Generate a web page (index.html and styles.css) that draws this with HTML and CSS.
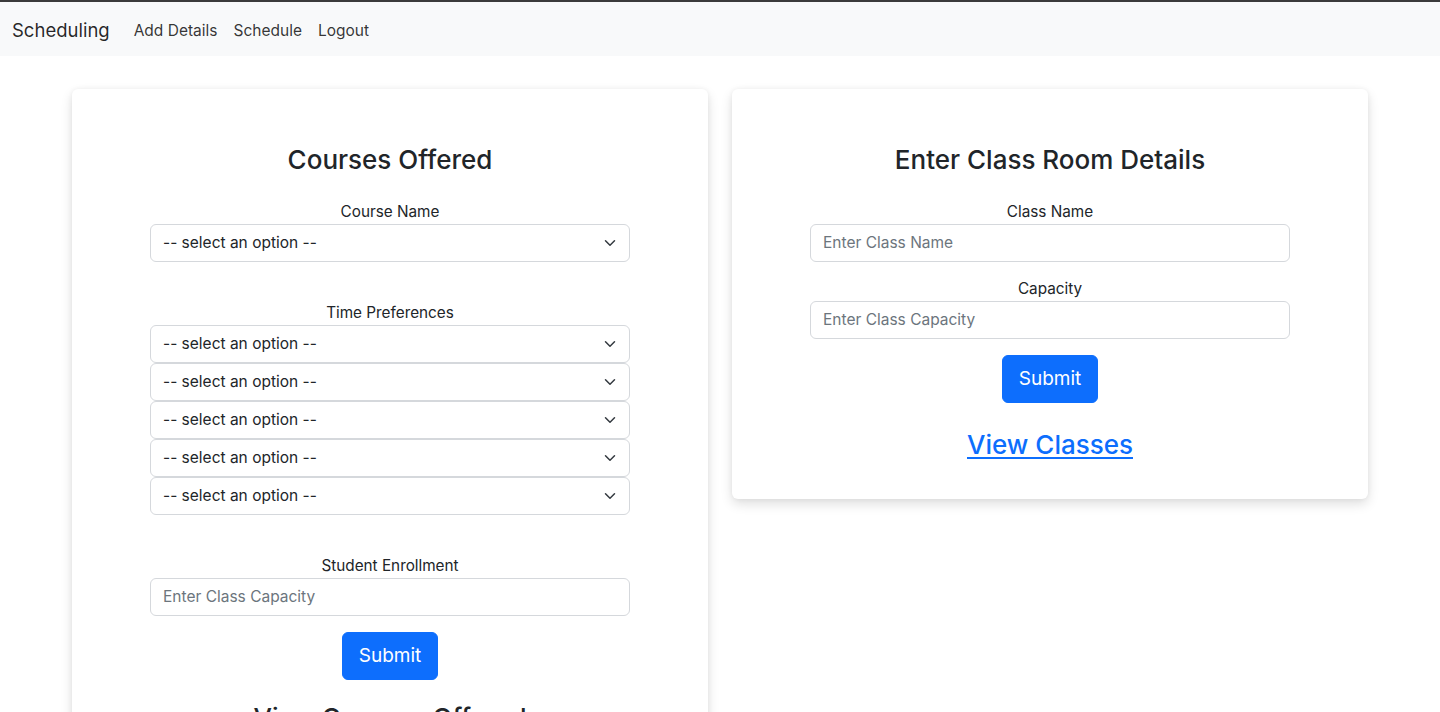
FILE: index.html
```html
<!DOCTYPE html>
<html lang="en">
<head>
<meta charset="utf-8">
<title>Scheduling</title>
<link rel="stylesheet" href="styles.css">
</head>
<body>
<nav class="navbar">
  <a class="brand" href="#">Scheduling</a>
  <ul class="nav">
    <li><a class="nav-link" href="#">Add Details</a></li>
    <li><a class="nav-link" href="#">Schedule</a></li>
    <li><a class="nav-link" href="#">Logout</a></li>
  </ul>
</nav>
<main class="container">
  <section class="card">
    <h3 class="card-title">Courses Offered</h3>
    <form class="form">
      <div class="field">
        <label class="label">Course Name</label>
        <div class="select-wrap">
          <select class="select"><option>-- select an option --</option></select>
          <svg class="chev" viewBox="0 0 16 16" width="16" height="12"><path d="m2 5 6 6 6-6" fill="none" stroke="#343a40" stroke-width="2" stroke-linecap="round" stroke-linejoin="round"/></svg>
        </div>
      </div>
      <div class="field field-spaced">
        <label class="label">Time Preferences</label>
        <div class="select-wrap">
          <select class="select"><option>-- select an option --</option></select>
          <svg class="chev" viewBox="0 0 16 16" width="16" height="12"><path d="m2 5 6 6 6-6" fill="none" stroke="#343a40" stroke-width="2" stroke-linecap="round" stroke-linejoin="round"/></svg>
        </div>
        <div class="select-wrap">
          <select class="select"><option>-- select an option --</option></select>
          <svg class="chev" viewBox="0 0 16 16" width="16" height="12"><path d="m2 5 6 6 6-6" fill="none" stroke="#343a40" stroke-width="2" stroke-linecap="round" stroke-linejoin="round"/></svg>
        </div>
        <div class="select-wrap">
          <select class="select"><option>-- select an option --</option></select>
          <svg class="chev" viewBox="0 0 16 16" width="16" height="12"><path d="m2 5 6 6 6-6" fill="none" stroke="#343a40" stroke-width="2" stroke-linecap="round" stroke-linejoin="round"/></svg>
        </div>
        <div class="select-wrap">
          <select class="select"><option>-- select an option --</option></select>
          <svg class="chev" viewBox="0 0 16 16" width="16" height="12"><path d="m2 5 6 6 6-6" fill="none" stroke="#343a40" stroke-width="2" stroke-linecap="round" stroke-linejoin="round"/></svg>
        </div>
        <div class="select-wrap">
          <select class="select"><option>-- select an option --</option></select>
          <svg class="chev" viewBox="0 0 16 16" width="16" height="12"><path d="m2 5 6 6 6-6" fill="none" stroke="#343a40" stroke-width="2" stroke-linecap="round" stroke-linejoin="round"/></svg>
        </div>
      </div>
      <div class="field field-spaced">
        <label class="label">Student Enrollment</label>
        <input class="input" type="text" placeholder="Enter Class Capacity">
      </div>
      <button class="btn" type="button">Submit</button>
    </form>
    <h3 class="sub-title">View Courses Offered</h3>
  </section>

  <section class="card">
    <h3 class="card-title">Enter Class Room Details</h3>
    <form class="form">
      <div class="field">
        <label class="label">Class Name</label>
        <input class="input" type="text" placeholder="Enter Class Name">
      </div>
      <div class="field field-tight">
        <label class="label">Capacity</label>
        <input class="input" type="text" placeholder="Enter Class Capacity">
      </div>
      <button class="btn" type="button">Submit</button>
    </form>
    <a class="big-link" href="#">View Classes</a>
  </section>
</main>
</body>
</html>
```

FILE: styles.css
```css
* {
  box-sizing: border-box;
}

body {
  margin: 0;
  font-family: Inter, "Liberation Sans", Arial, sans-serif;
  font-size: 16px;
  color: #212529;
  background: #fff;
  border-top: 2px solid #3b3b3b;
}

.navbar {
  height: 54px;
  background: #f8f9fa;
  display: flex;
  align-items: center;
  padding: 2px 12px 0;
}

.brand {
  font-size: 18.5px;
  color: rgba(0, 0, 0, 0.85);
  text-decoration: none;
  margin-right: 16px;
}

.nav {
  display: flex;
  list-style: none;
  margin: 0;
  padding: 0;
}

.nav-link {
  display: block;
  padding: 8px;
  font-size: 15.5px;
  color: rgba(0, 0, 0, 0.8);
  text-decoration: none;
}

.container {
  max-width: 1296px;
  margin: 33px auto 0;
  display: grid;
  grid-template-columns: 1fr 1fr;
  gap: 24px;
  align-items: start;
}

.card {
  background: #fff;
  border-radius: 6px;
  box-shadow: 0 5px 12px rgba(0, 0, 0, 0.13), 0 0 5px rgba(0, 0, 0, 0.05);
  padding: 55px 0 38px;
  display: flex;
  flex-direction: column;
  align-items: center;
}

.card-title {
  font-size: 26px;
  font-weight: 500;
  line-height: 1.25;
  margin: 0 0 23px;
  color: #212529;
}

.sub-title {
  font-size: 26px;
  font-weight: 500;
  line-height: 1.3;
  margin: 21px 0 0;
  color: #212529;
}

.form {
  width: 480px;
  display: flex;
  flex-direction: column;
  align-items: center;
}

.field {
  width: 100%;
  display: flex;
  flex-direction: column;
}

.field-spaced {
  margin-top: 39px;
}

.field-tight {
  margin-top: 15px;
}

.label {
  display: block;
  text-align: center;
  line-height: 24px;
  font-size: 15.3px;
}

.select-wrap {
  position: relative;
}

.select,
.input {
  display: block;
  width: 100%;
  height: 38px;
  padding: 6px 12px;
  font-family: inherit;
  font-size: 15.5px;
  color: #212529;
  background: #fff;
  border: 1px solid #d5d8dc;
  border-radius: 6px;
  outline: none;
}

.select {
  appearance: none;
  -webkit-appearance: none;
  padding-right: 36px;
}

.input::placeholder {
  color: #6c757d;
}

.chev {
  position: absolute;
  right: 12px;
  top: 13px;
  pointer-events: none;
}

.btn {
  margin-top: 16px;
  height: 48px;
  padding: 0 16px;
  font-family: inherit;
  font-size: 19px;
  color: #fff;
  background: #0d6efd;
  border: 1px solid #0d6efd;
  border-radius: 6px;
}

.big-link {
  margin-top: 25px;
  font-size: 26px;
  font-weight: 500;
  line-height: 1.3;
  color: #0d6efd;
  text-decoration: underline;
  text-underline-offset: 3px;
}
```
